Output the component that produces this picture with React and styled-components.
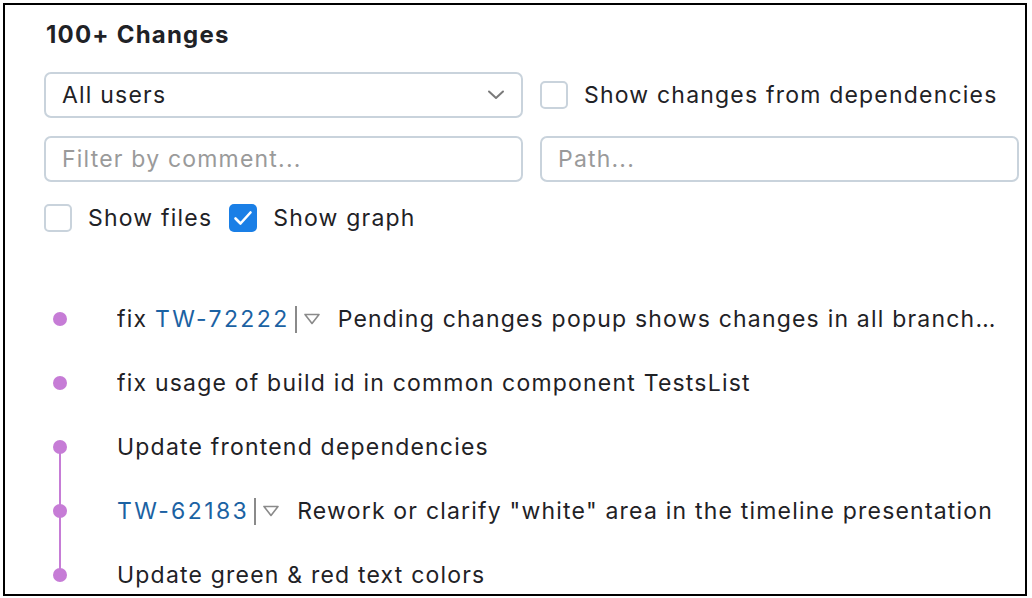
import React from "react";
import styled, { createGlobalStyle } from "styled-components";

const GlobalStyle = createGlobalStyle`
  html, body {
    margin: 0;
    padding: 0;
    background: #ffffff;
  }
  body {
    font-family: Inter, "Noto Sans", "Liberation Sans", sans-serif;
    color: #1f2226;
    letter-spacing: 1.2px;
  }
`;

const Frame = styled.div`
  margin: 3px 0 0 3px;
  width: 1024px;
  height: 593px;
  box-sizing: border-box;
  border: 2px solid #000;
  overflow: hidden;
  padding: 0 6px 0 39px;
`;

const Title = styled.h2`
  margin: 0;
  padding: 16px 0 0 2px;
  font-size: 24px;
  line-height: 28px;
  font-weight: 700;
  color: #1f2226;
`;

const Controls = styled.div`
  display: grid;
  grid-template-columns: 479px 479px;
  column-gap: 17px;
  row-gap: 18px;
  margin-top: 23px;
`;

const Field = styled.div`
  position: relative;
  height: 46px;
  box-sizing: border-box;
  border: 2px solid #c9d3dc;
  border-radius: 7px;
  display: flex;
  align-items: center;
  padding: 0 16px;
  font-size: 23px;
  color: ${(p) => (p.$placeholder ? "#9a9a9a" : "#1f2226")};
  justify-content: space-between;
`;

const CheckLabel = styled.label`
  display: flex;
  align-items: center;
  gap: 16px;
  font-size: 23px;
  color: #1f2226;
  white-space: nowrap;
`;

const Box = styled.span`
  width: 28px;
  height: 28px;
  box-sizing: border-box;
  border-radius: 5px;
  border: ${(p) => (p.$checked ? "none" : "2px solid #c9d3dc")};
  background: ${(p) => (p.$checked ? "#1a7fe6" : "#fff")};
  display: inline-flex;
  align-items: center;
  justify-content: center;
  flex: none;
`;

const Toggles = styled.div`
  grid-column: 1 / span 2;
  display: flex;
  align-items: center;
  gap: 17px;
  margin-top: 4px;
`;

const List = styled.div`
  margin-top: 55px;
  margin-left: -39px;
`;

const Row = styled.div`
  display: flex;
  align-items: center;
  height: 64px;
  font-size: 23px;
  white-space: nowrap;
`;

const Graph = styled.div`
  position: relative;
  width: 112px;
  height: 64px;
  flex: none;

  &::before {
    content: "";
    display: ${(p) => (p.$up ? "block" : "none")};
    position: absolute;
    left: 54px;
    top: 0;
    width: 2px;
    height: 32px;
    background: #c67cd6;
  }
  &::after {
    content: "";
    display: ${(p) => (p.$down ? "block" : "none")};
    position: absolute;
    left: 54px;
    top: 32px;
    width: 2px;
    height: 32px;
    background: #c67cd6;
  }
`;

const Dot = styled.span`
  position: absolute;
  left: 48px;
  top: 25px;
  width: 14px;
  height: 14px;
  border-radius: 50%;
  background: #c67cd6;
  z-index: 1;
`;

const Message = styled.div`
  flex: 1;
  min-width: 0;
  display: flex;
  align-items: center;
  overflow: hidden;
`;

const Prefix = styled.span`
  white-space: pre;
`;

const Issue = styled.span`
  color: #1b62a3;
  letter-spacing: 2.4px;
`;

const Separator = styled.span`
  width: 2px;
  height: 27px;
  background: #8a8a8a;
  margin: 0 6px 0 5px;
  flex: none;
`;

const Caret = styled.span`
  display: inline-flex;
  margin-right: 17px;
  flex: none;
`;

const Text = styled.span`
  overflow: hidden;
  text-overflow: ellipsis;
  padding-right: 22px;
`;

const Chevron = () => (
  <svg width="18" height="10" viewBox="0 0 18 10" fill="none">
    <path d="M2 1.5 L9 8 L16 1.5" stroke="#7a7a7a" strokeWidth="2" strokeLinecap="round" strokeLinejoin="round" />
  </svg>
);

const Check = () => (
  <svg width="20" height="16" viewBox="0 0 20 16" fill="none">
    <path d="M2.5 8.5 L7.5 13.5 L17.5 2.5" stroke="#fff" strokeWidth="2.6" strokeLinecap="round" strokeLinejoin="round" />
  </svg>
);

const Triangle = () => (
  <svg width="18" height="12" viewBox="0 0 18 12" fill="none">
    <path d="M2 1.5 H16 L9 10.5 Z" stroke="#8a8a8a" strokeWidth="1.6" strokeLinejoin="round" />
  </svg>
);

const changes = [
  { prefix: "fix ", issue: "TW-72222", text: "Pending changes popup shows changes in all branches of the project" },
  { text: "fix usage of build id in common component TestsList" },
  { text: "Update frontend dependencies", down: true },
  { issue: "TW-62183", text: "Rework or clarify \"white\" area in the timeline presentation", up: true, down: true },
  { text: "Update green & red text colors", up: true },
];

export default function App() {
  return (
    <>
      <GlobalStyle />
      <Frame>
        <Title>100+ Changes</Title>
        <Controls>
          <Field>
            All users
            <Chevron />
          </Field>
          <CheckLabel>
            <Box />
            Show changes from dependencies
          </CheckLabel>
          <Field $placeholder>Filter by comment...</Field>
          <Field $placeholder>Path...</Field>
          <Toggles>
            <CheckLabel>
              <Box />
              Show files
            </CheckLabel>
            <CheckLabel>
              <Box $checked>
                <Check />
              </Box>
              Show graph
            </CheckLabel>
          </Toggles>
        </Controls>
        <List>
          {changes.map((c, i) => (
            <Row key={i}>
              <Graph $up={c.up} $down={c.down}>
                <Dot />
              </Graph>
              <Message>
                {c.prefix && <Prefix>{c.prefix}</Prefix>}
                {c.issue && (
                  <>
                    <Issue>{c.issue}</Issue>
                    <Separator />
                    <Caret>
                      <Triangle />
                    </Caret>
                  </>
                )}
                <Text>{c.text}</Text>
              </Message>
            </Row>
          ))}
        </List>
      </Frame>
    </>
  );
}
